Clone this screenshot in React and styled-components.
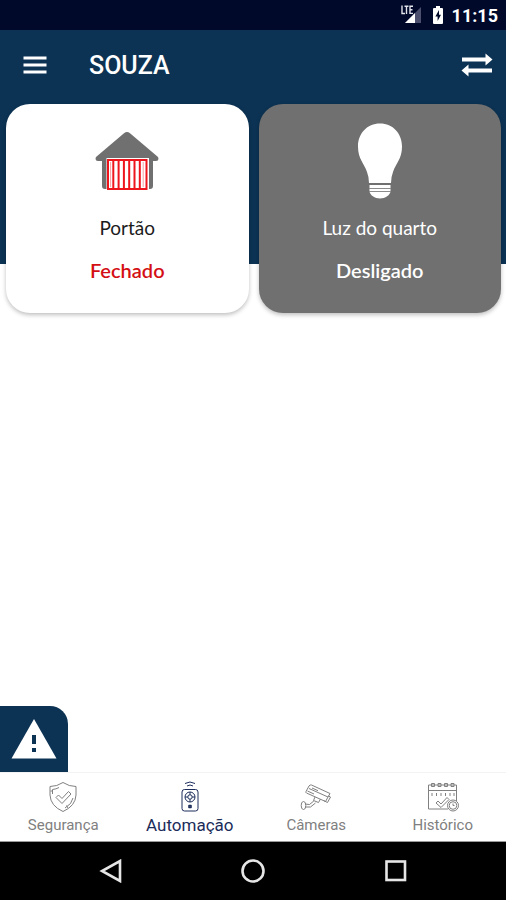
import React, { useState } from 'react';
import styled, { createGlobalStyle } from 'styled-components';

const NAVY = '#0c3354';
const GRAY = '#707070';

const devices = [
  { id: 'gate', name: 'Portão', status: 'Fechado', Icon: GarageIcon },
  {
    id: 'light',
    name: 'Luz do quarto',
    status: 'Desligado',
    Icon: BulbIcon,
    dark: true,
  },
];

const tabs = [
  { id: 'security', label: 'Segurança', Icon: ShieldIcon },
  { id: 'automation', label: 'Automação', Icon: RemoteIcon },
  { id: 'cameras', label: 'Câmeras', Icon: CameraIcon },
  { id: 'history', label: 'Histórico', Icon: CalendarIcon },
];

function SignalIcon() {
  return (
    <svg width="24" height="20" viewBox="0 0 24 20" aria-hidden="true">
      <path d="M21 2V18H5Z" fill="#4c4f6e" />
      <path d="M15 8V18H5Z" fill="#ffffff" />
      <path
        d="M2 0.500V8.500H5M4.500 1.200H8.500M6.500 1V9M13 1.200H10V8.400H13M10 4.800H12.500"
        fill="none"
        stroke="#e4e4ec"
        strokeWidth="1.4"
      />
    </svg>
  );
}

function BatteryIcon() {
  return (
    <svg width="12" height="20" viewBox="0 0 12 20" aria-hidden="true">
      <path
        d="M4 1H8V3H10Q11 3 11 4V18Q11 19 10 19H2Q1 19 1 18V4Q1 3 2 3H4Z"
        fill="#ffffff"
      />
      <path d="M7 5L3.400 11.400H5.600V16L9 9.800H7Z" fill="#00092a" />
    </svg>
  );
}

function MenuIcon() {
  return (
    <svg width="24" height="18" viewBox="0 0 24 18" aria-hidden="true">
      <path
        d="M0.500 2H23.500M0.500 9H23.500M0.500 16H23.500"
        stroke="#ffffff"
        strokeWidth="2.8"
      />
    </svg>
  );
}

function SwapIcon() {
  return (
    <svg width="32" height="24" viewBox="0 0 32 24" aria-hidden="true">
      <path d="M1 4.500H24.500V0.500L31.500 6.500L24.500 12.500V8.500H1Z" fill="#ffffff" />
      <path d="M31 15.500H7.500V11.500L0.500 17.500L7.500 23.500V19.500H31Z" fill="#ffffff" />
    </svg>
  );
}

function GarageIcon() {
  return (
    <svg width="64" height="58" viewBox="0 0 64 58" aria-hidden="true">
      <path
        d="M29 1.200Q32-1 35 1.200L63 25Q64.500 29 61 29H58V54Q58 57 55 57H10Q7 57 7 54V29H3Q-0.500 29 1 25Z"
        fill={GRAY}
      />
      <path d="M11.500 26H54V58H11.500Z" fill="#ffffff" />
      <path
        d="M13 28H51.500V57H13ZM18.300 28V57M23.600 28V57M28.900 28V57M34.200 28V57M39.500 28V57M44.800 28V57"
        fill="none"
        stroke="#ee151c"
        strokeWidth="2"
      />
      <path
        d="M15.600 30V55M48.200 30V55"
        stroke="#f5a0a2"
        strokeWidth="1"
      />
    </svg>
  );
}

function BulbIcon() {
  return (
    <svg width="46" height="76" viewBox="0 0 46 76" aria-hidden="true">
      <path
        d="M23 0.500C10 0.500 1 10.500 1 23.500C1 36 7 40 10 49Q12 54 12 60H34Q34 54 36 49C39 40 45 36 45 23.500C45 10.500 36 0.500 23 0.500Z"
        fill="#ffffff"
      />
      <path
        d="M12.500 62H33.500V68C33.500 72 28 75.500 23 75.500C18 75.500 12.500 72 12.500 68Z"
        fill="#ffffff"
      />
      <path d="M12 65.500H34M12 68.500H34" stroke="#8b8b8b" strokeWidth="1" />
    </svg>
  );
}

function AlertIcon() {
  return (
    <svg width="46" height="40" viewBox="0 0 46 40" aria-hidden="true">
      <path d="M23 0L45.500 39.500H0.500Z" fill="#ffffff" />
      <path d="M21 16H25V25H21ZM21 29H25V33H21Z" fill={NAVY} />
    </svg>
  );
}

function ShieldIcon() {
  return (
    <LineIcon viewBox="0 0 32 32" aria-hidden="true">
      <path d="M16 1.500Q10 5.500 3 5.500V14Q3.500 25 16 30.500Q28.500 25 29 14V5.500Q22 5.500 16 1.500Z" />
      <path d="M9 16.500L11.500 14L15 17.500L21.500 10.500L24 13L15 22.500Z" />
      <path d="M5.500 13V8.500Q9 8.200 12 6.500M26 17Q25 23 18 27M3.500 10H6M21 27L19.500 24.500" />
    </LineIcon>
  );
}

function RemoteIcon() {
  return (
    <LineIcon viewBox="0 0 32 32" aria-hidden="true">
      <path d="M11 2.500Q16-0.500 21 2.500M13 5Q16 3 19 5" />
      <rect x="8" y="8.500" width="16" height="21.500" rx="2.500" />
      <circle cx="16" cy="16" r="5" />
      <circle cx="16" cy="16" r="2.200" />
      <path d="M16 11V13.800M16 18.200V21M11 16H13.800M18.200 16H21" />
      <path d="M15 24.500H17V26.500H15Z" strokeWidth="1.600" />
    </LineIcon>
  );
}

function CameraIcon() {
  return (
    <LineIcon viewBox="0 0 32 32" aria-hidden="true">
      <path d="M11.500 4L30 12.500L25.500 20.500L6.500 12Q5.500 11.500 6 10.500L9 5Q10 3.500 11.500 4Z" />
      <path d="M9 7.500L28 16M7.500 10L14 13M12 7L18 9.700" />
      <path d="M23.500 19.500L27.500 21.500L30.500 16L28.500 15M15 16L13.500 19.500L18.500 21.500L20.500 18" />
      <path d="M13.800 20L9.500 23.500L5 23M15.500 22L10.500 26L5 26" />
      <ellipse cx="3.500" cy="24.500" rx="2.300" ry="4" />
    </LineIcon>
  );
}

function CalendarIcon() {
  return (
    <LineIcon viewBox="0 0 32 32" aria-hidden="true">
      <path d="M21 28H1.500V4H29.500V20M1.500 9.500H29.500" />
      <path d="M4.500 2.500H7.500V5.500H4.500ZM11 2.500H14V5.500H11ZM17.500 2.500H20.500V5.500H17.500ZM24 2.500H27V5.500H24Z" />
      <path d="M5 12V15M9.500 12V15M14 12V15M18.500 12V15M23 12V15M27 12V15" />
      <path d="M9 22L11 20L14 23L20 16.500L22 18.500L14 26.500Z" />
      <circle cx="26" cy="24.500" r="5.500" />
      <circle cx="26" cy="24.500" r="3.800" />
      <path d="M26 22.500V24.500H27.500" />
    </LineIcon>
  );
}

function DeviceCard({ name, status, Icon, dark }) {
  return (
    <Card type="button" $dark={dark}>
      <CardPicture>
        <Icon />
      </CardPicture>
      <DeviceName>{name}</DeviceName>
      <DeviceStatus $dark={dark}>{status}</DeviceStatus>
    </Card>
  );
}

function App() {
  const [activeTab, setActiveTab] = useState('automation');

  return (
    <>
      <GlobalStyle />
      <Screen>
        <StatusBar>
          <SignalIcon />
          <BatteryIcon />
          <Clock>11:15</Clock>
        </StatusBar>

        <Header>
          <IconButton type="button" aria-label="Menu">
            <MenuIcon />
          </IconButton>
          <Title>SOUZA</Title>
          <IconButton type="button" aria-label="Trocar">
            <SwapIcon />
          </IconButton>
        </Header>

        <Main>
          <Cards>
            {devices.map((device) => (
              <DeviceCard key={device.id} {...device} />
            ))}
          </Cards>
          <AlertButton type="button" aria-label="Alerta">
            <AlertIcon />
          </AlertButton>
        </Main>

        <TabBar>
          {tabs.map(({ id, label, Icon }) => (
            <Tab
              key={id}
              type="button"
              $active={id === activeTab}
              onClick={() => setActiveTab(id)}
            >
              <Icon />
              <TabLabel $active={id === activeTab}>{label}</TabLabel>
            </Tab>
          ))}
        </TabBar>

        <SystemBar>
          <SystemButton type="button" aria-label="Voltar">
            <svg width="24" height="24" viewBox="0 0 24 24">
              <path d="M21 2V22L3 12Z" />
            </svg>
          </SystemButton>
          <SystemButton type="button" aria-label="Início">
            <svg width="24" height="24" viewBox="0 0 24 24">
              <circle cx="12" cy="12" r="10.500" />
            </svg>
          </SystemButton>
          <SystemButton type="button" aria-label="Recentes">
            <svg width="24" height="24" viewBox="0 0 24 24">
              <rect x="3.500" y="2.500" width="18.500" height="18.500" />
            </svg>
          </SystemButton>
        </SystemBar>
      </Screen>
    </>
  );
}

const GlobalStyle = createGlobalStyle`
  * {
    box-sizing: border-box;
  }

  body {
    margin: 0;
    background-color: #ffffff;
    font-family: Roboto, sans-serif;
  }

  button {
    margin: 0;
    padding: 0;
    border: none;
    background: none;
    color: inherit;
    font-family: inherit;
    cursor: pointer;
  }

  svg {
    display: block;
    flex-shrink: 0;
  }
`;

const Screen = styled.div`
  min-height: 100vh;
  display: flex;
  flex-direction: column;
`;

const StatusBar = styled.div`
  height: 30px;
  display: flex;
  justify-content: flex-end;
  align-items: center;
  gap: 8px;
  padding: 0 8px;
  background-color: #00092a;
`;

const Clock = styled.span`
  padding-top: 2px;
  color: #ffffff;
  font-size: 18px;
  font-weight: 700;
  line-height: 20px;
`;

const Header = styled.header`
  height: 68px;
  display: flex;
  align-items: center;
  padding: 2px 13px 0 23px;
  background-color: ${NAVY};
`;

const IconButton = styled.button`
  display: flex;
`;

const Title = styled.h1`
  flex: 1;
  margin: 0 0 0 42px;
  padding-top: 2px;
  color: #ffffff;
  font-size: 25px;
  font-weight: 500;
  line-height: 28px;
`;

const Main = styled.main`
  flex: 1;
  display: flex;
  flex-direction: column;
  justify-content: space-between;
  align-items: flex-start;
  background: linear-gradient(${NAVY} 166px, #ffffff 166px);
`;

const Cards = styled.div`
  width: 100%;
  display: grid;
  grid-template-columns: 1fr 1fr;
  gap: 10px;
  padding: 6px 5px 6px 6px;
`;

const Card = styled.button`
  display: flex;
  flex-direction: column;
  align-items: center;
  padding: 16px 12px 31px;
  border-radius: 24px;
  background-color: ${(props) => (props.$dark ? GRAY : '#ffffff')};
  color: ${(props) => (props.$dark ? '#ffffff' : '#1c1c1c')};
  box-shadow: 0 2px 4px rgba(0, 0, 0, 0.25);
  font-family: Lato, sans-serif;
  line-height: 24px;
`;

const CardPicture = styled.span`
  height: 82px;
  display: flex;
  align-items: center;
`;

const DeviceName = styled.span`
  margin-top: 14px;
  font-size: 19px;
  font-weight: 400;
`;

const DeviceStatus = styled.span`
  margin-top: 18px;
  color: ${(props) => (props.$dark ? '#ffffff' : '#d40f14')};
  font-size: 20px;
  font-weight: 600;
`;

const AlertButton = styled.button`
  width: 68px;
  height: 66px;
  display: flex;
  justify-content: center;
  align-items: center;
  border-radius: 0 18px 0 0;
  background-color: ${NAVY};
`;

const TabBar = styled.nav`
  height: 70px;
  display: grid;
  grid-template-columns: repeat(4, 1fr);
  border-top: 1px solid #f3f3f3;
  border-bottom: 1px solid #9a9a9a;
  background-color: #ffffff;
`;

const Tab = styled.button`
  display: flex;
  flex-direction: column;
  align-items: center;
  padding-top: 8px;
  color: ${(props) => (props.$active ? '#1b2c5a' : '#808080')};
`;

const TabLabel = styled.span`
  font-size: ${(props) => (props.$active ? '17px' : '15px')};
  line-height: 24px;
`;

const LineIcon = styled.svg`
  width: 32px;
  height: 32px;
  fill: none;
  stroke: currentColor;
  stroke-width: 1;
  stroke-linejoin: round;
`;

const SystemBar = styled.footer`
  height: 58px;
  display: flex;
  justify-content: center;
  align-items: center;
  gap: 118px;
  background-color: #000000;
`;

const SystemButton = styled.button`
  display: flex;

  svg {
    fill: none;
    stroke: #e6e6e6;
    stroke-width: 2.6;
  }
`;

export default App;
